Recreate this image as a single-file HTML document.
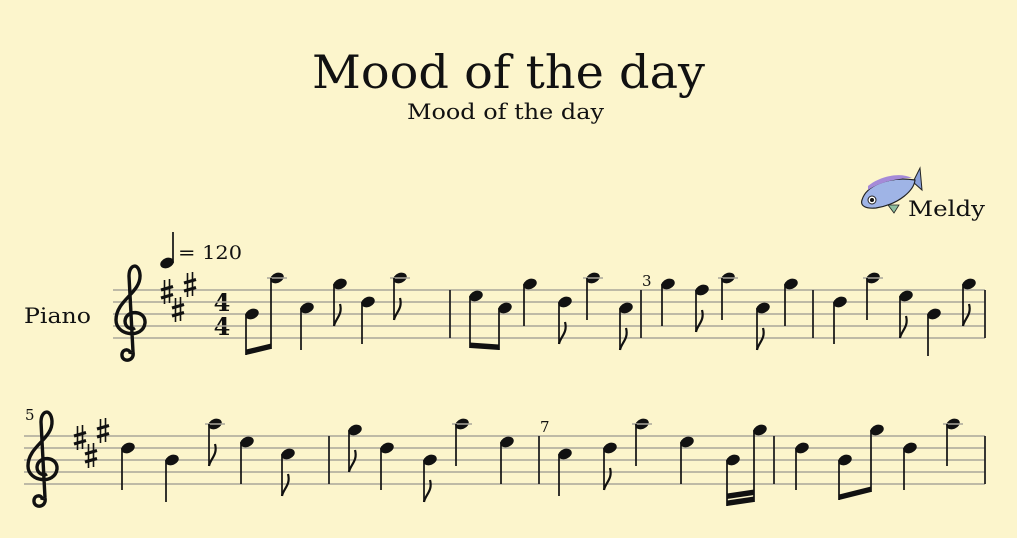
<!DOCTYPE html>
<html><head><meta charset="utf-8"><style>
html,body{margin:0;padding:0;width:1017px;height:538px;overflow:hidden;background:#fcf5cc;}
svg{display:block}
</style></head><body>
<svg id="s" width="1017" height="538" xmlns="http://www.w3.org/2000/svg">
<rect width="1017" height="538" fill="#fcf5cc"/>
<g font-family="DejaVu Serif, Liberation Serif, serif" fill="#111">
<text x="312" y="88" font-size="46" textLength="393" lengthAdjust="spacingAndGlyphs">Mood of the day</text>
<text x="407" y="119" font-size="21" textLength="197" lengthAdjust="spacingAndGlyphs">Mood of the day</text>
<text x="908" y="216" font-size="21" textLength="77" lengthAdjust="spacingAndGlyphs">Meldy</text>
<text x="24" y="323" font-size="21" textLength="67" lengthAdjust="spacingAndGlyphs">Piano</text>
<text x="642" y="286" font-size="15">3</text>
<text x="25" y="420" font-size="15">5</text>
<text x="540" y="432" font-size="15">7</text>
<text x="178" y="259" font-size="19" textLength="64" lengthAdjust="spacingAndGlyphs">= 120</text>
<text x="222" y="311" text-anchor="middle" font-weight="bold" font-size="24">4</text>
<text x="222" y="335" text-anchor="middle" font-weight="bold" font-size="24">4</text>
</g>
<!-- fish -->
<g>
<path d="M913,182 L920,168 L922,190 Z" fill="#8aa0d8" stroke="#222" stroke-width="1"/>
<path d="M862,200 C866,186 888,176 915,180 C914,190 900,204 876,208 C866,209 860,206 862,200 Z" fill="#9fb4e6" stroke="#222" stroke-width="1.2"/>
<path d="M868,186 C880,176 900,172 912,178 C898,178 880,182 868,190 Z" fill="#a58ad8"/>
<path d="M888,205 L894,213 L899,205 Z" fill="#8fc0a0" stroke="#222" stroke-width="0.8"/>
<circle cx="872" cy="200" r="4" fill="#fff" stroke="#222"/>
<circle cx="872" cy="200" r="2" fill="#111"/>
</g>
<g id="g"></g>
</svg>
<script>
var g=document.getElementById('g'),NS='http://www.w3.org/2000/svg';
function el(t,a){var e=document.createElementNS(NS,t);for(var k in a)e.setAttribute(k,a[k]);g.appendChild(e);return e;}
function staff(x1,x2,top){for(var i=0;i<5;i++)el('line',{x1:x1,x2:x2,y1:top+i*12,y2:top+i*12,stroke:'#a9a69a','stroke-width':1.4});}
staff(113,985,290);staff(24,985,436);
function bar(x,top){el('line',{x1:x,x2:x,y1:top,y2:top+48,stroke:'#222','stroke-width':1.8});}
[450,641,813,985].forEach(function(x){bar(x,290)});
[329,539,774,985].forEach(function(x){bar(x,436)});
function clef(x,top){var dx=x-130,dy=top-290;
el('path',{d:'M133,352 C135,362 121,363 122,354 C123,348 131,349 130,354 M133,352 L129,276 C129,264 139,262 140,275 C141,293 116,300 116,320 C116,336 143,339 145,323 C146,310 126,309 125,321 C125,328 132,330 135,328',fill:'none',stroke:'#111','stroke-width':3.4,transform:'translate('+dx+','+dy+')'});}
clef(130,290);clef(42,436);
function sharp(x,y){el('path',{d:'M'+(x-2.5)+','+(y-12)+' v24 M'+(x+2.5)+','+(y-13)+' v24',stroke:'#111','stroke-width':1.6});
el('path',{d:'M'+(x-6)+','+(y-2)+' l12,-3.5 M'+(x-6)+','+(y+6)+' l12,-3.5',stroke:'#111','stroke-width':3.2});}
function key(x,top){sharp(x,top+2);sharp(x+11,top+20);sharp(x+23,top-5);}
key(167,290);key(80,436);
function head(x,y){el('ellipse',{cx:x,cy:y,rx:7,ry:5,fill:'#111',transform:'rotate(-22 '+x+' '+y+')'});}
function ledger(x,y,top){if(y<top-6)el('line',{x1:x-10,x2:x+10,y1:top-12,y2:top-12,stroke:'#a9a69a','stroke-width':1.4});}
function note(x,y,top,type,end){head(x,y);ledger(x,y,top);var sx=x-6,ey=end||y+42;
el('line',{x1:sx,x2:sx,y1:y,y2:ey,stroke:'#111','stroke-width':1.7});
if(type=='e')el('path',{d:'M'+sx+','+ey+' C'+(sx+1)+','+(ey-7)+' '+(sx+9)+','+(ey-11)+' '+(sx+6)+','+(ey-22),fill:'none',stroke:'#111','stroke-width':2.2});}
function beam(x1,y1,x2,y2){el('path',{d:'M'+x1+','+y1+' L'+x2+','+y2+' L'+x2+','+(y2-5.5)+' L'+x1+','+(y1-5.5)+' Z',fill:'#111'});}
var T=290,F5=290,E5=296,D5=302,C5=308,B4=314,G5=284,A5=278;
note(252,B4,T,'b',355);note(277,A5,T,'b',349);beam(246,355,271,349);
note(307,C5,T,'q');note(340,G5,T,'e');note(368,D5,T,'q');note(400,A5,T,'e');
note(476,E5,T,'b',348);note(505,C5,T,'b',350);beam(470,348,499,350);
note(530,G5,T,'q');note(565,D5,T,'e');note(593,A5,T,'q');note(626,C5,T,'e');
note(668,G5,T,'q');note(702,F5,T,'e');note(728,A5,T,'q');note(763,C5,T,'e');note(791,G5,T,'q');
note(840,D5,T,'q');note(873,A5,T,'q');note(906,E5,T,'e');note(934,B4,T,'q');note(969,G5,T,'e');
var U=436;F5=436;E5=442;D5=448;C5=454;B4=460;G5=430;A5=424;
note(128,D5,U,'q');note(172,B4,U,'q');note(215,A5,U,'e');note(247,E5,U,'q');note(288,C5,U,'e');
note(355,G5,U,'e');note(387,D5,U,'q');note(430,B4,U,'e');note(462,A5,U,'q');note(507,E5,U,'q');
note(565,C5,U,'q');note(610,D5,U,'e');note(642,A5,U,'q');note(687,E5,U,'q');
note(733,B4,U,'b',506);note(760,G5,U,'b',502);beam(727,506,754,502);beam(727,499,754,495);
note(802,D5,U,'q');note(845,B4,U,'b',500);note(877,G5,U,'b',492);beam(839,500,871,492);
note(910,D5,U,'q');note(953,A5,U,'q');
head(167,263);el('line',{x1:173,x2:173,y1:263,y2:232,stroke:'#111','stroke-width':1.7});
</script>
</body></html>
